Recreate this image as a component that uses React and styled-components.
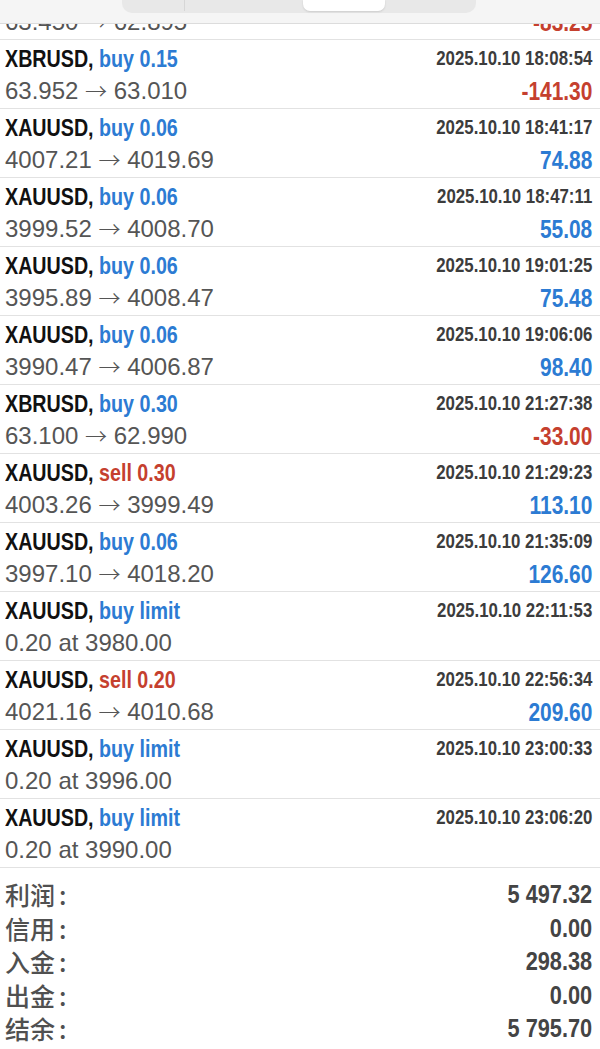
import React from "react";
import styled, { createGlobalStyle, css } from "styled-components";

const Global = createGlobalStyle`
  html, body { margin: 0; padding: 0; background: #fff; }
  body { width: 600px; height: 1049px; overflow: hidden; }
`;

const SANS = `"Liberation Sans", Arial, sans-serif`;
const CJK = `"Noto Sans CJK SC", "Noto Sans", sans-serif`;

const BLUE = "#2c7bd3";
const RED = "#c5402e";

/* Condensed bold face: Liberation Sans Bold narrowed to Arial Narrow proportions */
const narrow = (origin) => css`
  font-family: ${SANS};
  font-weight: 700;
  transform: scaleX(0.82);
  transform-origin: ${origin} center;
  white-space: nowrap;
`;

const Page = styled.div`
  position: relative;
  width: 600px;
  height: 1049px;
  overflow: hidden;
  background: #fff;
`;

const Header = styled.div`
  position: absolute;
  top: 0;
  left: 0;
  right: 0;
  height: 23px;
  background: #f5f5f5;
  border-bottom: 1px solid #dcdcdc;
  display: flex;
  justify-content: center;
  align-items: flex-start;
  z-index: 2;
`;

const Segmented = styled.div`
  margin-left: -3px;
  width: 354px;
  height: 13px;
  background: #e8e8e8;
  border-radius: 0 0 10px 10px;
  display: grid;
  grid-template-columns: 62px 28px 91px 82px 1fr;
  align-items: start;
`;

const Seg = styled.div`
  height: 11px;
  border-left: ${(p) => (p.$div ? "1px solid #d6d6d6" : "none")};
  ${(p) =>
    p.$active &&
    css`
      background: #fff;
      border-radius: 0 0 7px 7px;
      box-shadow: 0 1px 2px rgba(0, 0, 0, 0.12);
    `}
`;

const List = styled.div`
  margin-top: -29px;
  display: flex;
  flex-direction: column;
`;

const Row = styled.div`
  height: 68px;
  border-bottom: 1px solid #e2e2e2;
  padding: 0 8px 0 5px;
  display: grid;
  grid-template-columns: 1fr auto;
  grid-template-rows: 34px 34px;
  box-sizing: content-box;
`;

const Title = styled.div`
  ${narrow("left")};
  font-size: 24px;
  color: #111;
  align-self: end;
  line-height: 28px;
  padding-bottom: 1px;
`;

const Action = styled.span`
  color: ${(p) => (p.$sell ? RED : BLUE)};
`;

const Prices = styled.div`
  font-family: ${SANS};
  font-size: 24px;
  color: #555;
  line-height: 28px;
  align-self: start;
  padding-top: 3px;
  white-space: nowrap;
`;

const Arrow = styled.span`
  font-family: ${CJK};
  font-size: 22px;
  font-weight: 300;
  line-height: 0;
  color: #555;
`;

const DateText = styled.div`
  ${narrow("right")};
  font-size: 20.5px;
  color: #3c3c3c;
  text-align: right;
  align-self: end;
  line-height: 24px;
  padding-bottom: 4px;
`;

const Amount = styled.div`
  ${narrow("right")};
  font-size: 25.5px;
  color: ${(p) => (p.$neg ? RED : BLUE)};
  text-align: right;
  align-self: start;
  line-height: 28px;
  padding-top: 3px;
`;

const Summary = styled.div`
  padding: 10px 8px 0 5px;
  display: grid;
  grid-template-columns: 1fr auto;
  grid-auto-rows: 33.5px;
  align-items: center;
`;

const Label = styled.div`
  font-family: ${CJK};
  font-size: 25px;
  font-weight: 500;
  color: #505050;
  line-height: 33px;
`;

const Colon = styled.span`
  margin-left: 4px;
`;

const Value = styled.div`
  ${narrow("right")};
  font-size: 26.5px;
  color: #444;
  text-align: right;
  line-height: 33px;
`;

const rows = [
  { sym: "XBRUSD", act: "sell 0.15", prices: ["63.450", "62.895"], date: "2025.10.10 17:58:02", amt: "-83.25" },
  { sym: "XBRUSD", act: "buy 0.15", prices: ["63.952", "63.010"], date: "2025.10.10 18:08:54", amt: "-141.30" },
  { sym: "XAUUSD", act: "buy 0.06", prices: ["4007.21", "4019.69"], date: "2025.10.10 18:41:17", amt: "74.88" },
  { sym: "XAUUSD", act: "buy 0.06", prices: ["3999.52", "4008.70"], date: "2025.10.10 18:47:11", amt: "55.08" },
  { sym: "XAUUSD", act: "buy 0.06", prices: ["3995.89", "4008.47"], date: "2025.10.10 19:01:25", amt: "75.48" },
  { sym: "XAUUSD", act: "buy 0.06", prices: ["3990.47", "4006.87"], date: "2025.10.10 19:06:06", amt: "98.40" },
  { sym: "XBRUSD", act: "buy 0.30", prices: ["63.100", "62.990"], date: "2025.10.10 21:27:38", amt: "-33.00" },
  { sym: "XAUUSD", act: "sell 0.30", prices: ["4003.26", "3999.49"], date: "2025.10.10 21:29:23", amt: "113.10" },
  { sym: "XAUUSD", act: "buy 0.06", prices: ["3997.10", "4018.20"], date: "2025.10.10 21:35:09", amt: "126.60" },
  { sym: "XAUUSD", act: "buy limit", prices: "0.20 at 3980.00", date: "2025.10.10 22:11:53", amt: "" },
  { sym: "XAUUSD", act: "sell 0.20", prices: ["4021.16", "4010.68"], date: "2025.10.10 22:56:34", amt: "209.60" },
  { sym: "XAUUSD", act: "buy limit", prices: "0.20 at 3996.00", date: "2025.10.10 23:00:33", amt: "" },
  { sym: "XAUUSD", act: "buy limit", prices: "0.20 at 3990.00", date: "2025.10.10 23:06:20", amt: "" },
];

const summary = [
  ["利润", "5 497.32"],
  ["信用", "0.00"],
  ["入金", "298.38"],
  ["出金", "0.00"],
  ["结余", "5 795.70"],
];

export default function App() {
  return (
    <Page>
      <Global />
      <Header>
        <Segmented>
          <Seg />
          <Seg $div />
          <Seg />
          <Seg $active />
          <Seg />
        </Segmented>
      </Header>
      <List>
        {rows.map((r, i) => (
          <Row key={i}>
            <Title>
              {r.sym}, <Action $sell={r.act.startsWith("sell")}>{r.act}</Action>
            </Title>
            <DateText>{r.date}</DateText>
            <Prices>
              {Array.isArray(r.prices) ? (
                <>
                  {r.prices[0]} <Arrow>→</Arrow> {r.prices[1]}
                </>
              ) : (
                r.prices
              )}
            </Prices>
            <Amount $neg={r.amt.startsWith("-")}>{r.amt}</Amount>
          </Row>
        ))}
      </List>
      <Summary>
        {summary.map(([l, v]) => (
          <React.Fragment key={l}>
            <Label>
              {l}
              <Colon>:</Colon>
            </Label>
            <Value>{v}</Value>
          </React.Fragment>
        ))}
      </Summary>
    </Page>
  );
}
